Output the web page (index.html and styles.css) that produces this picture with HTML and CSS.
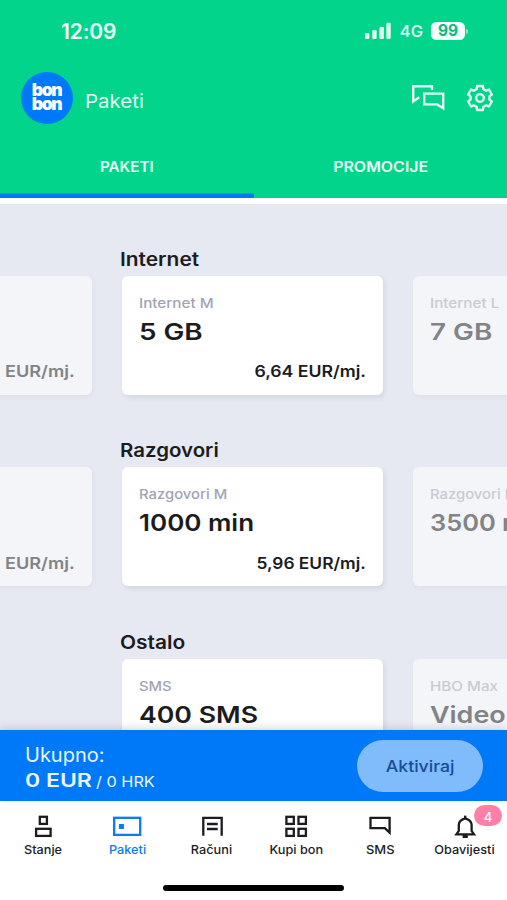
FILE: index.html
```html
<!DOCTYPE html>
<html lang="hr">
<head>
<meta charset="utf-8">
<title>Paketi</title>
<link rel="stylesheet" href="styles.css">
</head>
<body>
<div class="app">
  <header class="header">
    <div class="status">
      <span class="time">12:09</span>
      <div class="status-right">
        <svg class="signal" width="26" height="18" viewBox="0 0 26 18" fill="currentColor"><rect x="0" y="11" width="4.3" height="6" rx="1.2"/><rect x="7.3" y="8" width="4.3" height="9" rx="1.2"/><rect x="14.5" y="4.7" width="4.3" height="12.3" rx="1.2"/><rect x="21.4" y="0.8" width="4.3" height="16.2" rx="1.2"/></svg>
        <span class="network">4G</span>
        <span class="battery">99</span><span class="nub"></span>
      </div>
    </div>
    <div class="title-row">
      <div class="logo"><span>bon</span><span>bon</span></div>
      <h1 class="title"><span class="x111">Paketi</span></h1>
      <svg class="chat" width="36" height="28" viewBox="0 0 36 28" fill="none" stroke="currentColor" stroke-width="2.4"><path d="M22 6V2.2H3.2V17.4L9.3 13.3"/><path d="M33.2 24.3V9.6H14.2V20.4H27.2Z"/></svg>
      <svg class="gear" width="28" height="28" viewBox="-14 -14 28 28" fill="none" stroke="currentColor" stroke-width="2.3" stroke-linejoin="round"><path d="M-3.3-9L-2.9-12H2.9L3.3-9L6.15-7.35L8.9-8.5L11.85-3.5L9.45-1.65V1.65L11.85 3.5L8.9 8.5L6.15 7.35L3.3 9L2.9 12H-2.9L-3.3 9L-6.15 7.35L-8.9 8.5L-11.85 3.5L-9.45 1.65V-1.65L-11.85-3.5L-8.9-8.5L-6.15-7.35Z"/><circle r="3.8"/></svg>
    </div>
    <nav class="tabs">
      <a class="tab active"><span class="x109">PAKETI</span></a>
      <a class="tab"><span class="x114">PROMOCIJE</span></a>
    </nav>
  </header>

  <main class="content">
    <section class="group">
      <h2><span class="x113">Internet</span></h2>
      <div class="cards">
        <article class="card dim"><p class="price"><span class="x113">EUR/mj.</span></p></article>
        <article class="card"><p class="label"><span class="x117">Internet M</span></p><p class="value"><span class="x121">5 GB</span></p><p class="price"><span class="x111">6,64 EUR/mj.</span></p></article>
        <article class="card dim"><p class="label"><span class="x117">Internet L</span></p><p class="value"><span class="x121">7 GB</span></p></article>
      </div>
    </section>
    <section class="group">
      <h2><span class="x111">Razgovori</span></h2>
      <div class="cards">
        <article class="card dim"><p class="price"><span class="x113">EUR/mj.</span></p></article>
        <article class="card"><p class="label"><span class="x114">Razgovori M</span></p><p class="value"><span class="x113">1000 min</span></p><p class="price"><span class="x109">5,96 EUR/mj.</span></p></article>
        <article class="card dim"><p class="label"><span class="x114">Razgovori L</span></p><p class="value"><span class="x111">3500 min</span></p></article>
      </div>
    </section>
    <section class="group">
      <h2><span class="x113">Ostalo</span></h2>
      <div class="cards">
        <div class="card blank"></div>
        <article class="card"><p class="label"><span class="x114">SMS</span></p><p class="value"><span class="x116">400 SMS</span></p></article>
        <article class="card dim"><p class="label"><span class="x117">HBO Max</span></p><p class="value"><span class="x117">Video</span></p></article>
      </div>
    </section>
  </main>

  <div class="total">
    <div>
      <p class="total-label">Ukupno:</p>
      <p class="total-sum"><b><span class="x121">0 EUR</span></b><span class="hrk"><span class="x109">/ 0 HRK</span></span></p>
    </div>
    <button class="activate"><span class="x111">Aktiviraj</span></button>
  </div>

  <footer class="nav">
    <a class="item"><svg viewBox="0 0 32 24"><rect x="12.8" y="2.8" width="7.1" height="7.1"/><rect x="9.1" y="14.8" width="14.5" height="7.1"/></svg><span class="x107">Stanje</span></a>
    <a class="item current"><svg viewBox="0 0 32 24"><rect x="3.2" y="3.8" width="26" height="17.1"/><rect class="solid" x="7.9" y="10" width="5" height="5"/></svg><span class="x107">Paketi</span></a>
    <a class="item"><svg viewBox="0 0 32 24"><path d="M7.3 21.7V3.8H25.7V21.7M11 10H21.7M11 15H21.7"/></svg><span class="x107">Računi</span></a>
    <a class="item"><svg viewBox="0 0 32 24"><rect x="6.4" y="2.8" width="7.4" height="7.1"/><rect x="18.5" y="2.8" width="7.4" height="7.1"/><rect x="6.4" y="14.8" width="7.4" height="7.1"/><rect x="18.5" y="14.8" width="7.4" height="7.1"/></svg><span class="x107">Kupi bon</span></a>
    <a class="item"><svg viewBox="0 0 32 24"><path d="M6.5 3.8H25.6V18.7L20.8 14.2H6.5Z"/></svg><span class="x109">SMS</span></a>
    <a class="item"><svg viewBox="0 0 32 24"><path d="M7.4 20.4L9.8 17V10.5Q10.2 6 16.2 4.3Q22.2 6 22.6 10.5V17L25 20.4Z"/><rect class="solid" x="13.6" y="21" width="5.2" height="3"/><rect class="solid" x="15" y="1.6" width="2.4" height="3"/></svg><span class="x107">Obavijesti</span><i class="badge">4</i></a>
  </footer>
  <div class="home"></div>
</div>
</body>
</html>
```
FILE: styles.css
```css
* { box-sizing: border-box; }
body { margin: 0; font-family: Inter, "Liberation Sans", sans-serif; color: #1c1c1e; }
h1, h2, p { margin: 0; }

.app { width: 507px; height: 900px; display: flex; flex-direction: column; overflow: hidden; background: #fff; }

[class^="x1"] { display: inline-block; transform-origin: left center; white-space: nowrap; }
.x107 { transform: scaleX(1.06); }
.x109 { transform: scaleX(1.085); }
.x111 { transform: scaleX(1.105); }
.x113 { transform: scaleX(1.13); }
.x114 { transform: scaleX(1.14); }
.x116 { transform: scaleX(1.16); }
.x117 { transform: scaleX(1.17); }
.x121 { transform: scaleX(1.21); }
.tab span, .item span, .activate span { transform-origin: center; }
.price span { transform-origin: right center; }

.header { height: 198px; flex: none; background: #03d48b; color: #e9fff5; }
.status { height: 62px; display: flex; justify-content: space-between; padding: 0 39px 0 61px; line-height: 63px; }
.time { font-size: 21px; font-weight: 600; letter-spacing: -0.1px; }
.status-right { display: flex; align-items: center; }
.signal { margin-right: 9px; }
.network { font-size: 16.5px; font-weight: 500; margin-right: 8px; }
.battery { width: 34px; height: 18px; border-radius: 5.5px; background: #f2fffa; color: #0fb87c; font-size: 15.5px; font-weight: 700; line-height: 18px; text-align: center; }
.nub { width: 2px; height: 5px; margin-left: 1px; border-radius: 0 2px 2px 0; background: #8eeaca; }

.title-row { height: 74px; display: flex; align-items: center; padding: 0 13px 2px 21px; }
.logo { width: 52px; height: 52px; border-radius: 50%; background: #0079f8; color: #fff; display: flex; flex-direction: column; align-items: center; justify-content: center; font-size: 17.5px; font-weight: 900; line-height: 14.5px; letter-spacing: -1.3px; padding: 0 1px 2px 0; }
.title { flex: 1; margin: 6px 0 0 11.5px; font-size: 18.5px; font-weight: 400; line-height: 24px; }
.chat { margin-right: 19.5px; }
.gear { margin-right: 0.5px; }

.tabs { height: 62px; display: flex; }
.tab { flex: 1; line-height: 62px; text-align: center; font-size: 14px; font-weight: 600; }
.tab.active { box-shadow: inset 0 -4.5px #0079f8; }

.content { flex: 1; min-height: 0; overflow: hidden; border-top: 6px solid #fff; background: #e6e9f1; padding-top: 42.5px; }
.group { margin-bottom: 43px; }
.group h2 { margin-left: 120px; font-size: 18.5px; font-weight: 600; line-height: 24px; }
.cards { display: flex; gap: 30px; width: max-content; margin: 5px 0 0 -169px; }
.group + .group { margin-top: 43.5px; }
.card { width: 261px; height: 119px; border-radius: 6px; background: #fff; padding: 17px 17.5px 13.5px 17px; display: flex; flex-direction: column; box-shadow: 2px 3px 4px rgba(120, 135, 140, 0.16); }
.card.dim { background: #f3f5f9; box-shadow: 1px 2px 4px rgba(120, 135, 140, 0.08); }
.card.blank { visibility: hidden; }
.label { font-size: 13px; font-weight: 500; line-height: 20px; color: #a2a3b4; }
.value { margin-top: 4px; font-size: 23px; font-weight: 600; line-height: 30px; }
.price { margin-top: auto; font-size: 16px; font-weight: 600; line-height: 20px; text-align: right; }
.dim .label { color: #c9cbd1; }
.dim .value, .dim .price { color: #828386; }

.total { flex: none; height: 71px; display: flex; justify-content: space-between; align-items: center; padding: 0 24px 0 25px; background: #0079f8; color: #eaf6ff; position: relative; box-shadow: 0 -2px 8px rgba(60, 70, 80, 0.2); }
.total-label { margin-top: 6px; font-size: 20px; line-height: 25px; }
.total-sum { display: flex; font-size: 19px; line-height: 25px; }
.total-sum b { width: 71px; font-weight: 600; }
.hrk { font-size: 15px; line-height: 27px; }
.activate { width: 126px; height: 52px; border: 0; border-radius: 26px; background: #80bbfc; color: #174d96; font: 500 16px/52px Inter, sans-serif; padding: 0; }

.nav { flex: none; height: 84px; display: flex; padding-left: 0.5px; }
.item { flex: 1; display: flex; flex-direction: column; align-items: center; padding-top: 13px; font-size: 12px; font-weight: 500; line-height: 16px; position: relative; }
.item svg { width: 32px; height: 24px; margin-bottom: 3.5px; overflow: visible; fill: none; stroke: currentColor; stroke-width: 2.3; }
.item svg .solid { fill: currentColor; stroke: none; }
.item.current { color: #0a7af5; }
.badge { position: absolute; left: 51.5px; top: 4px; width: 28px; height: 21px; border-radius: 10.5px; background: #ff7fa9; color: #fff; font-size: 13px; font-style: normal; line-height: 25px; text-align: center; }

.home { flex: none; width: 181px; height: 6px; margin: 0 auto 9px; border-radius: 3px; background: #000; }
```
